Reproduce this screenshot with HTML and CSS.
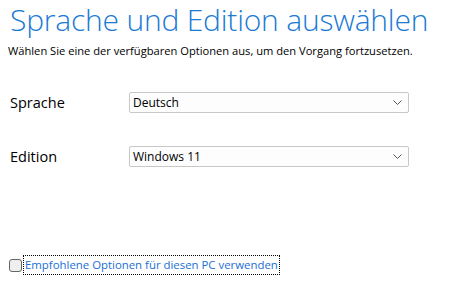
FILE: index.html
```html
<!doctype html>
<html>
<head>
<meta charset="utf-8">
<title>Sprache und Edition auswählen</title>
<link rel="stylesheet" href="styles.css">
</head>
<body>
	<div class="page">
		<h1 class="title">Sprache und Edition auswählen</h1>
		<p class="intro">Wählen Sie eine der verfügbaren Optionen aus, um den Vorgang fortzusetzen.</p>

		<div class="row">
			<span class="label">Sprache</span>
			<div class="select">
				<span class="value">Deutsch</span>
				<svg class="chev" width="9" height="5" viewBox="0 0 9 5"><path d="M0.5 0.5 L4.5 4.5 L8.5 0.5" fill="none" stroke="#555" stroke-width="1"/></svg>
			</div>
		</div>

		<div class="row">
			<span class="label">Edition</span>
			<div class="select">
				<span class="value">Windows 11</span>
				<svg class="chev" width="9" height="5" viewBox="0 0 9 5"><path d="M0.5 0.5 L4.5 4.5 L8.5 0.5" fill="none" stroke="#555" stroke-width="1"/></svg>
			</div>
		</div>

		<label class="check">
			<span class="box"></span>
			<span class="check-text">Empfohlene Optionen für diesen PC verwenden</span>
		</label>
	</div>
</body>
</html>
```

FILE: styles.css
```css
body{
	margin:0;
	padding:0;
	background:#fff;
	font-family:"Open Sans","Noto Sans",sans-serif;
}

.page{
	padding:0 8px;
	width:442px;
	height:304px;
	display:flex;
	flex-direction:column;
}

.title{
	margin:0;
	padding-left:2px;
	font-size:30px;
	font-weight:300;
	color:#1a7ad4;
	line-height:40px;
	letter-spacing:-0.2px;
	white-space:nowrap;
}

.intro{
	margin:3px 0 0 0;
	font-size:11.15px;
	color:#000;
	line-height:16px;
	white-space:nowrap;
}

.row{
	display:flex;
	align-items:center;
	margin-top:33px;
}

.label{
	width:119px;
	padding-left:2px;
	font-size:14.5px;
	color:#000;
}

.select{
	box-sizing:border-box;
	width:280px;
	height:21px;
	border:1px solid #c8c8c8;
	border-radius:2px;
	background:#fdfdfd;
	display:flex;
	align-items:center;
	justify-content:space-between;
	padding:0 6px 0 3px;
}

.value{
	font-size:12px;
	color:#000;
}

.check{
	margin-top:auto;
	margin-bottom:30px;
	display:flex;
	align-items:center;
	gap:2px;
	padding-left:1px;
}

.box{
	width:11px;
	height:11px;
	border:1px solid #666;
	border-radius:3px;
	background:#efefef;
}

.check-text{
	font-size:11.4px;
	color:#1a6fd6;
	outline:1px dotted #000;
	padding:1px 1px 2px 1px;
}
```
